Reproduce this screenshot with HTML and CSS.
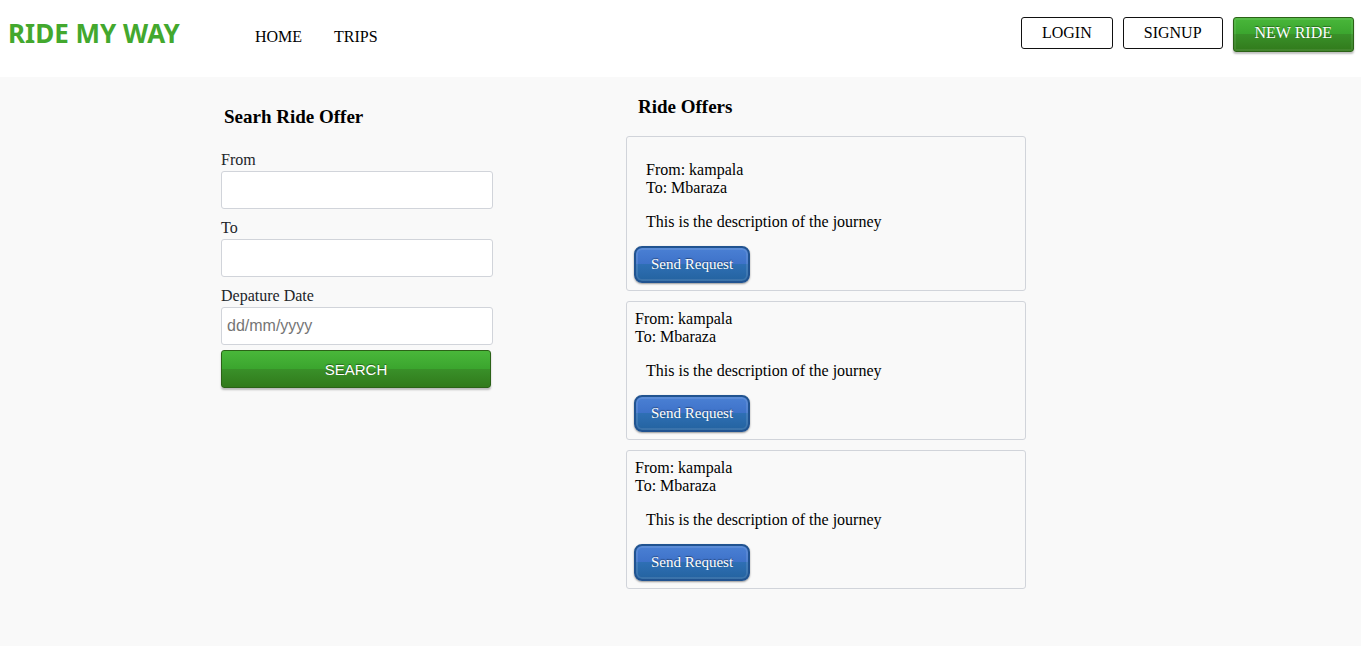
FILE: index.html
```html
<!DOCTYPE html>
<html lang="en">
<head>
<meta charset="utf-8">
<title>Ride My Way</title>
<link rel="stylesheet" href="styles.css">
</head>
<body>
<header class="header">
  <a class="logo" href="#">RIDE MY WAY</a>
  <nav class="nav">
    <a href="#">HOME</a>
    <a href="#">TRIPS</a>
  </nav>
  <div class="actions">
    <a class="outline" href="#">LOGIN</a>
    <a class="outline" href="#">SIGNUP</a>
    <a class="green new-ride" href="#">NEW RIDE</a>
  </div>
</header>
<main class="main">
  <form class="search">
    <h3 class="search-title">Searh Ride Offer</h3>
    <label for="from">From</label>
    <input type="text" id="from">
    <label for="to">To</label>
    <input type="text" id="to">
    <label for="date">Depature Date</label>
    <input type="text" id="date" placeholder="dd/mm/yyyy">
    <button class="green submit" type="button">SEARCH</button>
  </form>
  <section class="offers">
    <h3 class="offers-title">Ride Offers</h3>
    <article class="card">
      <p class="route inset">From: kampala<br>To: Mbaraza</p>
      <p class="description">This is the description of the journey</p>
      <button class="request" type="button">Send Request</button>
    </article>
    <article class="card">
      <p class="route">From: kampala<br>To: Mbaraza</p>
      <p class="description">This is the description of the journey</p>
      <button class="request" type="button">Send Request</button>
    </article>
    <article class="card">
      <p class="route">From: kampala<br>To: Mbaraza</p>
      <p class="description">This is the description of the journey</p>
      <button class="request" type="button">Send Request</button>
    </article>
  </section>
</main>
</body>
</html>
```

FILE: styles.css
```css
* {
  box-sizing: border-box;
}

body {
  margin: 0;
  min-height: 100vh;
  background: #f9f9f9;
  color: #000;
  font: 16px/18px "Liberation Serif", "Times New Roman", serif;
}

h3,
p {
  margin: 0;
}

.header {
  display: flex;
  align-items: flex-start;
  padding: 17px 7px 25px 8px;
  background: #fff;
}

.header a {
  color: #000;
  text-decoration: none;
}

.header .logo {
  color: #43a82e;
  font: bold 26px/32px "Noto Sans", sans-serif;
}

.nav {
  display: flex;
  gap: 32px;
  margin: 11px 0 0 75px;
}

.actions {
  display: flex;
  align-items: flex-start;
  gap: 10px;
  margin-left: auto;
}

.header .outline {
  padding: 6px 20px;
  border: 1px solid #111;
  border-radius: 3px;
}

.green {
  border: 1px solid #2b6217;
  border-radius: 3px;
  background: linear-gradient(#49b73a, #3ba52e 49%, #399029 50%, #317a1b);
  box-shadow: 0 2px 2px rgba(0, 0, 0, 0.25);
  color: #fff;
  text-shadow: 0 -1px 1px rgba(0, 0, 0, 0.4);
}

.header .new-ride {
  padding: 6px 21px 9px;
  box-shadow: 0 2px 2px rgba(0, 0, 0, 0.25), inset 0 0 0 2px rgba(255, 255, 255, 0.08);
  color: #fff;
}

.main {
  display: grid;
  grid-template-columns: 221fr 405fr 400fr 335fr;
  padding-bottom: 24px;
}

.search {
  display: flex;
  flex-direction: column;
  grid-column: 2;
  width: 272px;
  padding-top: 30px;
  color: #212529;
}

.search-title,
.offers-title {
  color: #000;
  font-size: 19px;
  line-height: 20px;
}

.search-title {
  margin: 0 0 24px 3px;
}

.search input {
  height: 38px;
  margin: 2px 0 10px;
  padding: 0 5px;
  border: 1px solid #d1d4da;
  border-radius: 3px;
  background: #fff;
  font: 16px "Liberation Sans", Arial, sans-serif;
}

.search input::placeholder {
  color: #757575;
}

.search #date {
  margin-bottom: 5px;
}

.submit {
  height: 38px;
  margin-right: 2px;
  font: 15px "Liberation Sans", Arial, sans-serif;
}

.offers {
  grid-column: 3;
  padding-top: 20px;
}

.offers-title {
  margin: 0 0 19px 12px;
}

.card {
  margin-bottom: 10px;
  padding: 8px 7px 7px;
  border: 1px solid #d1d4da;
  border-radius: 3px;
}

.route {
  padding-left: 1px;
}

.route.inset {
  padding: 16px 0 0 12px;
}

.description {
  margin: 16px 0 15px 12px;
}

.request {
  display: block;
  height: 37px;
  padding: 0 15px;
  border: 2px solid #215390;
  border-radius: 8px;
  background: linear-gradient(#4a80d4, #3e72c9 49%, #2e6fb4 50%, #2463a0);
  box-shadow: 0 1px 2px rgba(0, 0, 0, 0.4), inset 0 0 0 2px rgba(255, 255, 255, 0.1);
  color: #fff;
  font: 15px "Liberation Serif", "Times New Roman", serif;
  text-shadow: 0 -1px 1px rgba(0, 0, 0, 0.4);
}
```
